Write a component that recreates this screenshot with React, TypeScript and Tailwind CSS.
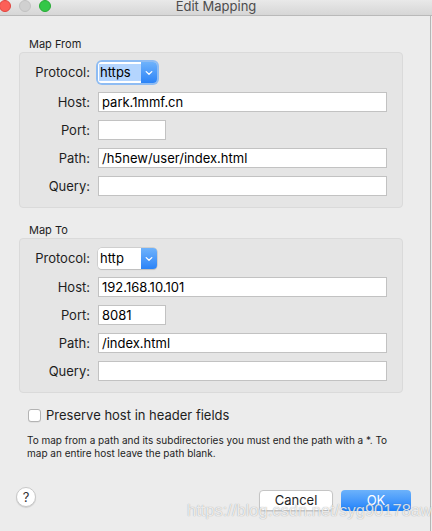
import React from "react";

const Chevron = () => (
  <svg width="8" height="6" viewBox="0 0 8 6" fill="none">
    <path d="M1.2 1.6 L4 4.3 L6.8 1.6" stroke="white" strokeWidth="1.3" strokeLinecap="round" strokeLinejoin="round" />
  </svg>
);

function Select({ value, focused }: { value: string; focused?: boolean }) {
  return (
    <div
      className={
        "flex h-[21px] w-[59px] rounded-[4px] " +
        (focused ? "shadow-[0_0_0_2px_#8ebcf3]" : "shadow-[0_0_0_0.5px_#b9b9b9,0_1px_1px_rgba(0,0,0,0.15)]")
      }
    >
      <div className="flex flex-1 items-center rounded-l-[4px] bg-white pl-[1px]">
        {focused ? (
          <div className="flex h-[17px] w-full items-center bg-[#b4d5fe] pl-[1px] text-[13px] text-black">{value}</div>
        ) : (
          <div className="pl-[1px] text-[13px] text-black">{value}</div>
        )}
      </div>
      <div className="flex w-[16px] items-center justify-center rounded-r-[4px] bg-gradient-to-b from-[#6eb2fb] to-[#2a83f7]">
        <Chevron />
      </div>
    </div>
  );
}

function Input({ value, w }: { value?: string; w: string }) {
  return (
    <div className={"flex h-[20px] items-center border border-[#c2c2c2] bg-white pl-[3px] text-[13px] text-black " + w}>
      {value}
    </div>
  );
}

function Row({ label, children, mt }: { label: string; children: React.ReactNode; mt: string }) {
  return (
    <div className={"flex items-center " + mt}>
      <div className="w-[70px] text-right text-[13px] text-[#1e1e1e]">{label}</div>
      <div className="ml-[8px]">{children}</div>
    </div>
  );
}

function Panel({
  title,
  protocol,
  focused,
  host,
  port,
  path,
  pt,
  selMb,
}: {
  title: string;
  protocol: string;
  focused?: boolean;
  host: string;
  port: string;
  path: string;
  pt: string;
  selMb: string;
}) {
  return (
    <div>
      <div className="ml-[10px] h-[13px] text-[11px] leading-[13px] text-[#1e1e1e]">{title}</div>
      <div className={"mt-[1px] w-[384px] rounded-[4px] border border-[#dadada] bg-[#e5e5e5] pb-[11px] " + pt}>
        <Row label="Protocol:" mt="">
          <Select value={protocol} focused={focused} />
        </Row>
        <Row label="Host:" mt={selMb}>
          <Input value={host} w="w-[289px]" />
        </Row>
        <Row label="Port:" mt="mt-[8px]">
          <Input value={port} w="w-[68px]" />
        </Row>
        <Row label="Path:" mt="mt-[8px]">
          <Input value={path} w="w-[289px]" />
        </Row>
        <Row label="Query:" mt="mt-[8px]">
          <Input w="w-[289px]" />
        </Row>
      </div>
    </div>
  );
}

export default function App() {
  return (
    <div
      className="relative h-[531px] w-[432px] overflow-hidden bg-[#ececec] leading-none"
      style={{ fontFamily: "Inter, 'Liberation Sans', sans-serif" }}
    >
      {/* Title bar */}
      <div className="grid h-[16px] grid-cols-[1fr_auto_1fr] items-center border-b border-[#b9b9b9] bg-gradient-to-b from-[#e9e9e9] to-[#d6d6d6]">
        <div className="-ml-[1px] -mt-[3px] flex items-center gap-[8px]">
          <div className="h-[12px] w-[12px] rounded-full border border-[#e0443e] bg-[#fc5f57]" />
          <div className="h-[12px] w-[12px] rounded-full border border-[#c2c2c2] bg-[#d0d0d0]" />
          <div className="h-[12px] w-[12px] rounded-full border border-[#27aa35] bg-[#34c748]" />
        </div>
        <div className="-mt-[2px] text-[13px] text-[#4d4d4d]">Edit Mapping</div>
        <div />
      </div>

      <div className="absolute right-[1px] top-[16px] h-[515px] w-[1px] bg-[#b5b5b5]" />

      <div className="pl-[19px] pt-[22px]">
        <Panel
          title="Map From"
          protocol="https"
          focused
          host="park.1mmf.cn"
          port=""
          path="/h5new/user/index.html"
          pt="pt-[9px]"
          selMb="mt-[9px]"
        />
        <div className="mt-[16px]">
          <Panel
            title="Map To"
            protocol="http"
            host="192.168.10.101"
            port="8081"
            path="/index.html"
            pt="pt-[9px]"
            selMb="mt-[8px]"
          />
        </div>

        <div className="ml-[9px] mt-[16px] flex items-center">
          <div className="h-[13px] w-[13px] rounded-[3px] border border-[#b3b3b3] bg-white shadow-[0_0.5px_0.5px_rgba(0,0,0,0.1)]" />
          <div className="ml-[5px] text-[13px] text-[#1e1e1e]">Preserve host in header fields</div>
        </div>

        <div className="ml-[8px] mt-[12px] w-[380px] text-[10px] leading-[13px] text-[#1e1e1e]">
          To map from a path and its subdirectories you must end the path with a *. To map an entire host leave the path blank.
        </div>
      </div>

      <div className="mt-[27px] flex items-start pl-[16px] pr-[21px]">
        <div className="flex h-[20px] w-[20px] items-center justify-center rounded-full border border-[#c8c8c8] bg-white text-[13px] text-[#333] shadow-[0_1px_1px_rgba(0,0,0,0.12)]">
          ?
        </div>
        <div className="ml-auto mt-[3px] flex gap-[8px]">
          <div className="flex h-[21px] w-[74px] items-center justify-center rounded-[4px] border border-[#c5c5c5] bg-white text-[13px] text-[#1e1e1e] shadow-[0_1px_1px_rgba(0,0,0,0.1)]">
            Cancel
          </div>
          <div className="flex h-[21px] w-[70px] items-center justify-center rounded-[4px] bg-gradient-to-b from-[#6cb2fb] to-[#1a80fa] text-[13px] text-white">
            OK
          </div>
        </div>
      </div>

      <div
        className="absolute left-[187px] top-[502px] text-[16.5px] leading-none text-white/80 [text-shadow:0_0_1px_rgba(0,0,0,0.4)]"
        style={{ fontFamily: "'Liberation Sans', Arial, sans-serif" }}
      >
        https://blog.csdn.net/syg90178aw
      </div>
    </div>
  );
}
